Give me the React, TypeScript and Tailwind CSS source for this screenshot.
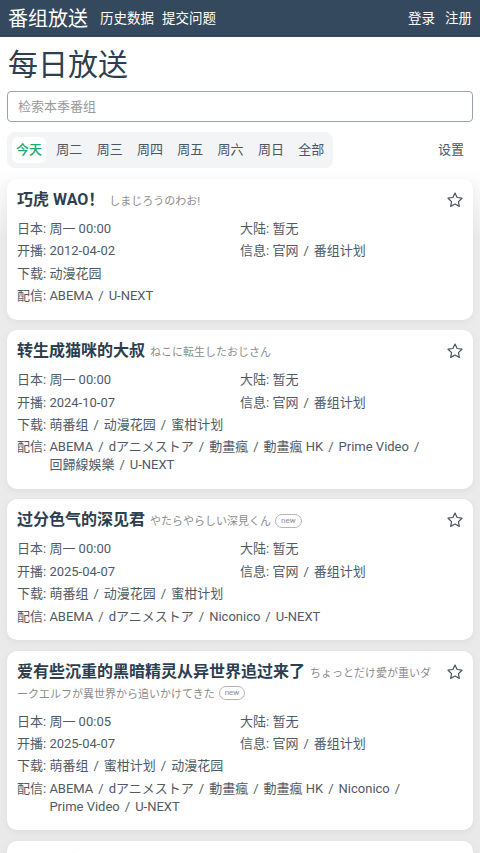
import React from "react";

type Row = { label: string; items: string[] };
type Show = {
  title: string;
  sub: string;
  isNew?: boolean;
  left: Row[];
  right: Row[];
  full: Row[];
};

const shows: Show[] = [
  {
    title: "巧虎 WAO！",
    sub: "しまじろうのわお!",
    left: [
      { label: "日本", items: ["周一 00:00"] },
      { label: "开播", items: ["2012-04-02"] },
    ],
    right: [
      { label: "大陆", items: ["暂无"] },
      { label: "信息", items: ["官网", "番组计划"] },
    ],
    full: [
      { label: "下载", items: ["动漫花园"] },
      { label: "配信", items: ["ABEMA", "U-NEXT"] },
    ],
  },
  {
    title: "转生成猫咪的大叔",
    sub: "ねこに転生したおじさん",
    left: [
      { label: "日本", items: ["周一 00:00"] },
      { label: "开播", items: ["2024-10-07"] },
    ],
    right: [
      { label: "大陆", items: ["暂无"] },
      { label: "信息", items: ["官网", "番组计划"] },
    ],
    full: [
      { label: "下载", items: ["萌番组", "动漫花园", "蜜柑计划"] },
      {
        label: "配信",
        items: ["ABEMA", "dアニメストア", "動畫瘋", "動畫瘋 HK", "Prime Video", "回歸線娛樂", "U-NEXT"],
      },
    ],
  },
  {
    title: "过分色气的深见君",
    sub: "やたらやらしい深見くん",
    isNew: true,
    left: [
      { label: "日本", items: ["周一 00:00"] },
      { label: "开播", items: ["2025-04-07"] },
    ],
    right: [
      { label: "大陆", items: ["暂无"] },
      { label: "信息", items: ["官网", "番组计划"] },
    ],
    full: [
      { label: "下载", items: ["萌番组", "动漫花园", "蜜柑计划"] },
      { label: "配信", items: ["ABEMA", "dアニメストア", "Niconico", "U-NEXT"] },
    ],
  },
  {
    title: "爱有些沉重的黑暗精灵从异世界追过来了",
    sub: "ちょっとだけ愛が重いダークエルフが異世界から追いかけてきた",
    isNew: true,
    left: [
      { label: "日本", items: ["周一 00:05"] },
      { label: "开播", items: ["2025-04-07"] },
    ],
    right: [
      { label: "大陆", items: ["暂无"] },
      { label: "信息", items: ["官网", "番组计划"] },
    ],
    full: [
      { label: "下载", items: ["萌番组", "蜜柑计划", "动漫花园"] },
      {
        label: "配信",
        items: ["ABEMA", "dアニメストア", "動畫瘋", "動畫瘋 HK", "Niconico", "Prime Video", "U-NEXT"],
      },
    ],
  },
  {
    title: "林荫都市：可以再三兴",
    sub: "",
    left: [
      { label: "日本", items: ["周一 00:30"] },
      { label: "开播", items: ["2025-04-07"] },
    ],
    right: [
      { label: "大陆", items: ["暂无"] },
      { label: "信息", items: ["官网", "番组计划"] },
    ],
    full: [],
  },
];

function StarIcon() {
  return (
    <svg width="18" height="18" viewBox="0 0 24 24" fill="none" stroke="#4b5563" strokeWidth="1.6" strokeLinejoin="round">
      <path d="M12 2.8l2.85 5.9 6.45.9-4.7 4.5 1.15 6.4L12 17.4l-5.75 3.1 1.15-6.4-4.7-4.5 6.45-.9z" />
    </svg>
  );
}

function InfoRow({ row }: { row: Row }) {
  return (
    <div className="flex leading-[18px]">
      <span className="shrink-0 whitespace-nowrap">{row.label}:&nbsp;</span>
      <span className="flex-1 min-w-0">
        {row.items.map((it, i) => (
          <React.Fragment key={i}>
            <span className="whitespace-nowrap">
              {it}
              {i < row.items.length - 1 ? <span className="px-[5px]">/</span> : null}
            </span>
            {i < row.items.length - 1 ? <wbr /> : null}
          </React.Fragment>
        ))}
      </span>
    </div>
  );
}

function Card({ s }: { s: Show }) {
  return (
    <div className="bg-white rounded-[10px] shadow-[0_2px_8px_rgba(0,0,0,0.05)] px-[10px] pt-[10px] pb-[14.5px]">
      <div className="flex items-start">
        <div className="flex-1 min-w-0 pr-[8px] leading-[21px] [line-break:loose]">
          <span className="text-[16px] font-bold text-[#2c3e50]">{s.title}</span>
          {s.sub && (
            <span className="ml-[5px] text-[11px] leading-[14px] text-[#8c8c8c]">{s.sub}</span>
          )}
          {s.isNew && (
            <span className="ml-[4px] inline-block align-middle h-[14px] px-[5px] rounded-full border border-[#b5b5b5] text-[8px] leading-[12px] text-[#8c8c8c]">
              new
            </span>
          )}
        </div>
        <div className="shrink-0 pt-[2px] mr-[-1px]">
          <StarIcon />
        </div>
      </div>
      <div className="mt-[10px] text-[13px] text-[#4f5b66] flex flex-col gap-[4.4px]">
        <div className="grid grid-cols-2">
          <InfoRow row={s.left[0]} />
          <InfoRow row={s.right[0]} />
        </div>
        <div className="grid grid-cols-2">
          <InfoRow row={s.left[1]} />
          <InfoRow row={s.right[1]} />
        </div>
        {s.full.map((r, i) => (
          <InfoRow key={i} row={r} />
        ))}
      </div>
    </div>
  );
}

const tabs = ["今天", "周二", "周三", "周四", "周五", "周六", "周日", "全部"];

export default function App() {
  return (
    <div
      className="min-h-[853px] bg-white"
      style={{ fontFamily: 'Roboto, "Noto Sans CJK SC", "Noto Sans CJK JP", sans-serif' }}
    >
      <header className="h-[37px] bg-[#35495e] flex items-center px-[8px] text-white">
        <span className="text-[20px] leading-none">番组放送</span>
        <nav className="ml-[12px] flex gap-[8px] text-[13.5px]">
          <span>历史数据</span>
          <span>提交问题</span>
        </nav>
        <div className="ml-auto flex gap-[10px] text-[13.5px]">
          <span>登录</span>
          <span>注册</span>
        </div>
      </header>
      <div className="px-[7px]">
        <h1 className="mt-[10px] text-[30px] leading-[36px] text-[#2c3e50] pl-[1px]">每日放送</h1>
        <div className="mt-[8px] h-[31px] rounded-[4px] border border-[#9aa3ad] flex items-center px-[10px] text-[13px] text-[#9a9a9a]">
          检索本季番组
        </div>
        <div className="mt-[10px] flex items-center justify-between">
          <div className="h-[36px] bg-[#f3f4f6] rounded-[8px] px-[5px] flex items-center gap-[6.3px]">
            {tabs.map((t, i) => (
              <span
                key={t}
                className={
                  i === 0
                    ? "h-[26px] px-[4px] flex items-center rounded-[6px] bg-white text-[13px] text-[#1fa971] font-medium"
                    : "h-[26px] px-[4px] flex items-center text-[13px] text-[#4b5563]"
                }
              >
                {t}
              </span>
            ))}
          </div>
          <span className="mr-[9px] text-[13px] text-[#4b5563]">设置</span>
        </div>
      </div>
      <div className="px-[7px] pt-[11px] pb-[20px] flex flex-col gap-[10.5px] bg-[linear-gradient(to_bottom,#ffffff_0px,#ebebeb_70px,#e9e9e9_100%)]">
        {shows.map((s, i) => (
          <Card key={i} s={s} />
        ))}
      </div>
    </div>
  );
}
